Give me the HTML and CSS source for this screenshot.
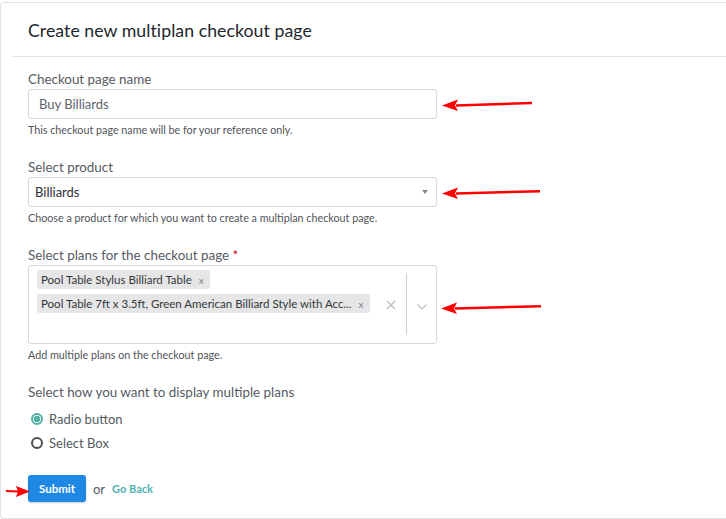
FILE: index.html
```html
<!DOCTYPE html>
<html>
<head>
<meta charset="utf-8">
<link rel="stylesheet" href="styles.css">
</head>
<body>
<div class="card">
  <div class="card-head">
    <h1 class="title">Create new multiplan checkout page</h1>
  </div>
  <div class="card-body">
    <div class="field">
      <label class="label">Checkout page name</label>
      <div class="input-row">
        <div class="input">Buy Billiards</div>
      </div>
      <p class="help">This checkout page name will be for your reference only.</p>
    </div>

    <div class="field">
      <label class="label">Select product</label>
      <div class="input-row">
        <div class="input select"><span class="val">Billiards</span><span class="caret"></span></div>
      </div>
      <p class="help">Choose a product for which you want to create a multiplan checkout page.</p>
    </div>

    <div class="field">
      <label class="label">Select plans for the checkout page <span class="req">*</span></label>
      <div class="multi">
        <div class="tags">
          <span class="tag">Pool Table Stylus Billiard Table <span class="tx">x</span></span>
          <span class="tag">Pool Table 7ft x 3.5ft, Green American Billiard Style with Acc... <span class="tx">x</span></span>
        </div>
        <div class="indicators">
          <span class="clear">
            <svg width="12" height="12" viewBox="0 0 12 12"><path d="M2 2 L10 10 M10 2 L2 10" stroke="#c4c4c4" stroke-width="1.6"/></svg>
          </span>
          <span class="sep"></span>
          <span class="chev">
            <svg width="12" height="8" viewBox="0 0 12 8"><path d="M1.5 1.5 L6 6 L10.5 1.5" fill="none" stroke="#c4c4c4" stroke-width="1.4"/></svg>
          </span>
        </div>
      </div>
      <p class="help">Add multiple plans on the checkout page.</p>
    </div>

    <div class="field radios">
      <label class="label">Select how you want to display multiple plans</label>
      <div class="radio on"><span class="dot"></span>Radio button</div>
      <div class="radio"><span class="dot"></span>Select Box</div>
    </div>

    <div class="actions">
      <button class="btn">Submit</button>
      <span class="or">or</span>
      <a class="back">Go Back</a>
    </div>
  </div>

  <svg class="arrow a1" width="92" height="14" viewBox="0 0 92 14"><path d="M14 6.2 L90 3.8 L90 6.2 L14 8.8 Z" fill="#f00"/><path d="M0 7.6 L16 1.5 L13 7.5 L16 13 Z" fill="#f00"/></svg>
  <svg class="arrow a2" width="100" height="14" viewBox="0 0 100 14"><path d="M14 6.2 L98 4 L98 6.4 L14 8.8 Z" fill="#f00"/><path d="M0 7.6 L16 1.5 L13 7.5 L16 13 Z" fill="#f00"/></svg>
  <svg class="arrow a3" width="102" height="14" viewBox="0 0 102 14"><path d="M14 6.2 L100 4 L100 6.4 L14 8.8 Z" fill="#f00"/><path d="M0 7.6 L16 1.5 L13 7.5 L16 13 Z" fill="#f00"/></svg>
  <svg class="arrow a4" width="24" height="12" viewBox="0 0 24 12"><path d="M0 5 L12 5.5 L12 7.5 L0 7 Z" fill="#f00"/><path d="M24 6.5 L10 1 L12 6.5 L10 12 Z" fill="#f00"/></svg>
</div>
</body>
</html>
```
FILE: styles.css
```css
* { box-sizing: border-box; }
html, body { margin: 0; padding: 0; background: #fff; }
body {
  font-family: Lato, "Open Sans", "Liberation Sans", sans-serif;
  color: #5b6068;
  width: 726px;
  height: 519px;
  overflow: hidden;
}
.card {
  position: relative;
  margin-top: 2px;
  width: 726px;
  height: 517px;
  border: 1px solid #dde2e8;
  border-right: none;
  border-radius: 4px 0 0 4px;
  background: #fff;
}
.card-head {
  margin-left: 11px;
  height: 54px;
  border-bottom: 1px solid #e1e4e8;
  display: flex;
  align-items: center;
  padding-left: 16px;
}
.title {
  margin: 0;
  font-size: 17.7px;
  font-weight: 400;
  color: #23272c;
  letter-spacing: 0.05px;
  padding-top: 1px;
}
.card-body {
  padding: 14px 0 0 27px;
}
.field { margin-bottom: 23px; }
.label {
  display: block;
  font-size: 13.4px;
  color: #555b63;
  line-height: 17px;
  margin-bottom: 1px;
}
.req { color: #d0021b; }
.input-row { width: 409px; }
.input {
  height: 30px;
  border: 1px solid #d6d9dd;
  border-radius: 3px;
  padding: 0 10px;
  display: flex;
  align-items: center;
  font-size: 13px;
  color: #5c636b;
}
.select { padding: 0 8px 0 6px; justify-content: space-between; color: #2b2f34; }
.caret {
  width: 0; height: 0;
  border-left: 3.5px solid transparent;
  border-right: 3.5px solid transparent;
  border-top: 4px solid #888;
}
.help {
  margin: 4px 0 0;
  font-size: 10.75px;
  line-height: 13px;
  color: #4f5359;
}
.multi {
  width: 409px;
  height: 79px;
  border: 1px solid #d6d9dd;
  border-radius: 3px;
  display: flex;
  padding: 4px 0 0 8px;
}
.tags {
  flex: 1;
  display: flex;
  flex-direction: column;
  align-items: flex-start;
  gap: 5px;
}
.tag {
  background: #e6e6e6;
  border-radius: 2px;
  height: 19px;
  display: inline-flex;
  align-items: center;
  padding: 0 6px 0 4px;
  font-size: 11.5px;
  color: #33373c;
  white-space: nowrap;
}
.tx { margin-left: 7px; color: #7a7f86; font-size: 10px; }
.indicators {
  display: flex;
  align-items: flex-start;
  padding-top: 3px;
}
.clear { margin-top: 22px; width: 30px; text-align: center; }
.sep { width: 1px; height: 62px; background: #cfcfcf; margin: 0; }
.chev { margin-top: 22px; width: 29px; text-align: center; }
.clear svg, .chev svg { display: inline-block; }
.radios { margin-bottom: 24px; }
.radios .label { margin-bottom: 9px; }
.radio {
  display: flex;
  align-items: center;
  font-size: 13px;
  color: #555b63;
  height: 17px;
  margin-bottom: 7px;
  padding-left: 3px;
}
.dot {
  width: 12px; height: 12px;
  border-radius: 50%;
  border: 2px solid #4a4d52;
  margin-right: 6px;
  display: inline-block;
}
.radio.on .dot {
  border-color: #4fb3a3;
  background: radial-gradient(circle, #4fb3a3 0 3px, #fff 3.3px);
}
.actions {
  display: flex;
  align-items: center;
}
.btn {
  width: 58px;
  height: 27px;
  border: none;
  border-radius: 3px;
  background: #1e88e5;
  color: #fff;
  font-family: inherit;
  font-size: 11.5px;
  font-weight: 700;
  box-shadow: 0 1px 2px rgba(0,0,0,0.2);
  padding: 0;
}
.or { margin-left: 7px; font-size: 13px; color: #555b63; }
.back { margin-left: 7px; font-size: 11px; font-weight: 700; color: #4fb3b5; }
.arrow { position: absolute; }
.a1 { left: 441px; top: 95px; }
.a2 { left: 441px; top: 183px; }
.a3 { left: 440px; top: 298px; }
.a4 { left: 5px; top: 482px; }
```
